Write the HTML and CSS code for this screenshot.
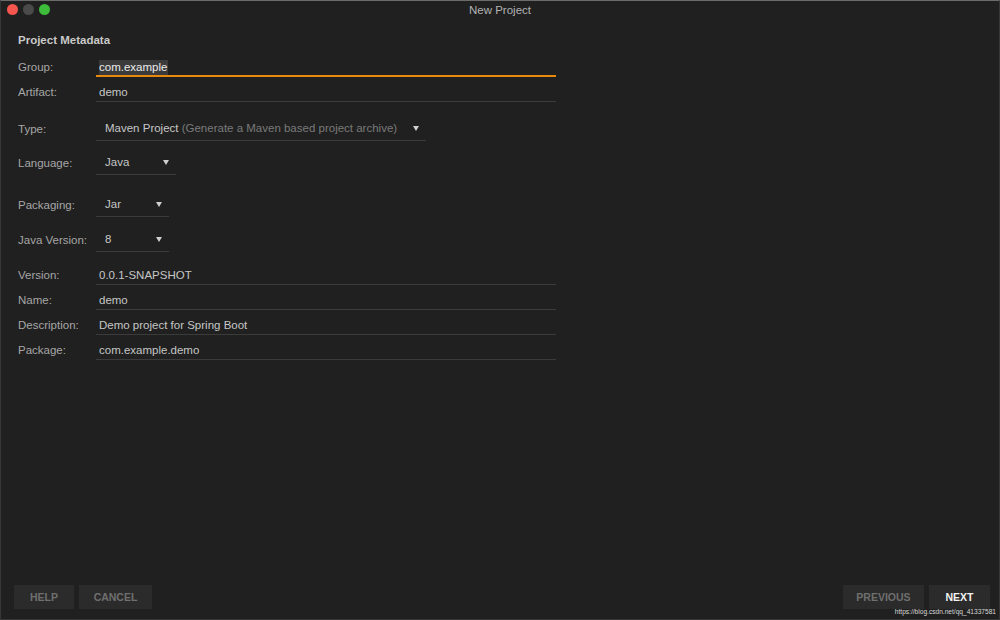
FILE: index.html
```html
<!DOCTYPE html>
<html>
<head>
<meta charset="utf-8">
<link rel="stylesheet" href="styles.css">
</head>
<body>
<div class="window">
  <div class="titlebar">
    <div class="lights">
      <span class="light red"></span>
      <span class="light grey"></span>
      <span class="light green"></span>
    </div>
    <div class="title">New Project</div>
  </div>
  <div class="content">
    <div class="heading">Project Metadata</div>
    <div class="row row-first">
      <div class="label">Group:</div>
      <div class="field text focused"><span class="sel">com.example</span></div>
    </div>
    <div class="row">
      <div class="label">Artifact:</div>
      <div class="field text">demo</div>
    </div>
    <div class="row drop-row gap-14">
      <div class="label">Type:</div>
      <div class="field drop w-type"><span class="val">Maven Project <span class="hint">(Generate a Maven based project archive)</span></span><span class="arrow"></span></div>
    </div>
    <div class="row drop-row gap-9">
      <div class="label">Language:</div>
      <div class="field drop w-lang"><span class="val">Java</span><span class="arrow"></span></div>
    </div>
    <div class="row drop-row gap-17">
      <div class="label">Packaging:</div>
      <div class="field drop w-small"><span class="val">Jar</span><span class="arrow"></span></div>
    </div>
    <div class="row drop-row gap-10">
      <div class="label">Java Version:</div>
      <div class="field drop w-small"><span class="val">8</span><span class="arrow"></span></div>
    </div>
    <div class="row gap-13">
      <div class="label">Version:</div>
      <div class="field text">0.0.1-SNAPSHOT</div>
    </div>
    <div class="row">
      <div class="label">Name:</div>
      <div class="field text">demo</div>
    </div>
    <div class="row">
      <div class="label">Description:</div>
      <div class="field text">Demo project for Spring Boot</div>
    </div>
    <div class="row">
      <div class="label">Package:</div>
      <div class="field text">com.example.demo</div>
    </div>
  </div>
  <div class="footer">
    <div class="btns">
      <div class="btn w-help">HELP</div>
      <div class="btn w-cancel">CANCEL</div>
    </div>
    <div class="btns">
      <div class="btn w-prev">PREVIOUS</div>
      <div class="btn w-next primary">NEXT</div>
    </div>
  </div>
  <div class="watermark">https://blog.csdn.net/qq_41337581</div>
</div>
</body>
</html>
```
FILE: styles.css
```css
* { box-sizing: border-box; }
html, body { margin: 0; padding: 0; background: #202020; }
body { font-family: "Liberation Sans", Arial, sans-serif; }

.window {
  position: relative;
  width: 1000px;
  height: 620px;
  background: #202020;
  border: 1px solid #363636;
  border-top-color: #6b6b6b;
  display: flex;
  flex-direction: column;
  overflow: hidden;
}

.titlebar {
  height: 19px;
  display: flex;
  align-items: center;
  justify-content: center;
  position: relative;
}
.lights {
  position: absolute;
  left: 6px;
  top: 3px;
  display: flex;
  gap: 5px;
}
.light {
  width: 11px;
  height: 11px;
  border-radius: 50%;
  display: block;
}
.red { background: #f5564e; }
.grey { background: #4a4a4a; }
.green { background: #3cbc3a; }
.title {
  font-size: 11.5px;
  color: #b2b2b2;
  line-height: 19px;
}

.content {
  flex: 1;
  padding: 12px 0 0 17px;
}

.heading {
  font-size: 11.5px;
  font-weight: bold;
  color: #c9c9c9;
  line-height: 16px;
}

.row {
  display: flex;
  align-items: flex-end;
  margin-top: 5px;
  font-size: 11.5px;
}
.row-first { margin-top: 9px; }
.gap-14 { margin-top: 14px; }
.gap-9 { margin-top: 9px; }
.gap-17 { margin-top: 17px; }
.gap-10 { margin-top: 10px; }
.gap-13 { margin-top: 13px; }

.label {
  width: 78px;
  color: #a6a6a6;
  line-height: 19px;
  align-self: center;
}
.drop-row .label { line-height: 24px; }

.field {
  border-bottom: 1px solid #3b3b3b;
  color: #c6c6c6;
}
.field.text {
  width: 460px;
  height: 20px;
  line-height: 21px;
  padding-left: 3px;
}
.field.focused {
  border-bottom: 2px solid #e8890f;
}
.sel {
  background: #3b3b3b;
  color: #ececec;
  display: inline-block;
  line-height: 15px;
  padding: 0 1px 0 0;
}

.field.drop {
  height: 25px;
  line-height: 24px;
  padding-left: 9px;
  display: flex;
  justify-content: space-between;
  align-items: center;
  padding-right: 7px;
}
.w-type { width: 330px; }
.w-lang { width: 80px; }
.w-small { width: 73px; }
.hint { color: #7a7a7a; }
.arrow {
  width: 0;
  height: 0;
  border-left: 3.5px solid transparent;
  border-right: 3.5px solid transparent;
  border-top: 5px solid #cfcfcf;
}

.footer {
  display: flex;
  justify-content: space-between;
  padding: 0 9px 10px 13px;
}
.btns { display: flex; gap: 5px; }
.btn {
  height: 24px;
  line-height: 24px;
  background: #2b2b2b;
  color: #6f6f6f;
  font-size: 10.5px;
  font-weight: bold;
  text-align: center;
}
.btn.primary { color: #f2f2f2; }
.w-help { width: 60px; }
.w-cancel { width: 73px; }
.w-prev { width: 81px; }
.w-next { width: 61px; }

.watermark {
  position: absolute;
  right: 3px;
  bottom: 2px;
  font-size: 6.6px;
  color: #d8d8d8;
  line-height: 10px;
}
```
